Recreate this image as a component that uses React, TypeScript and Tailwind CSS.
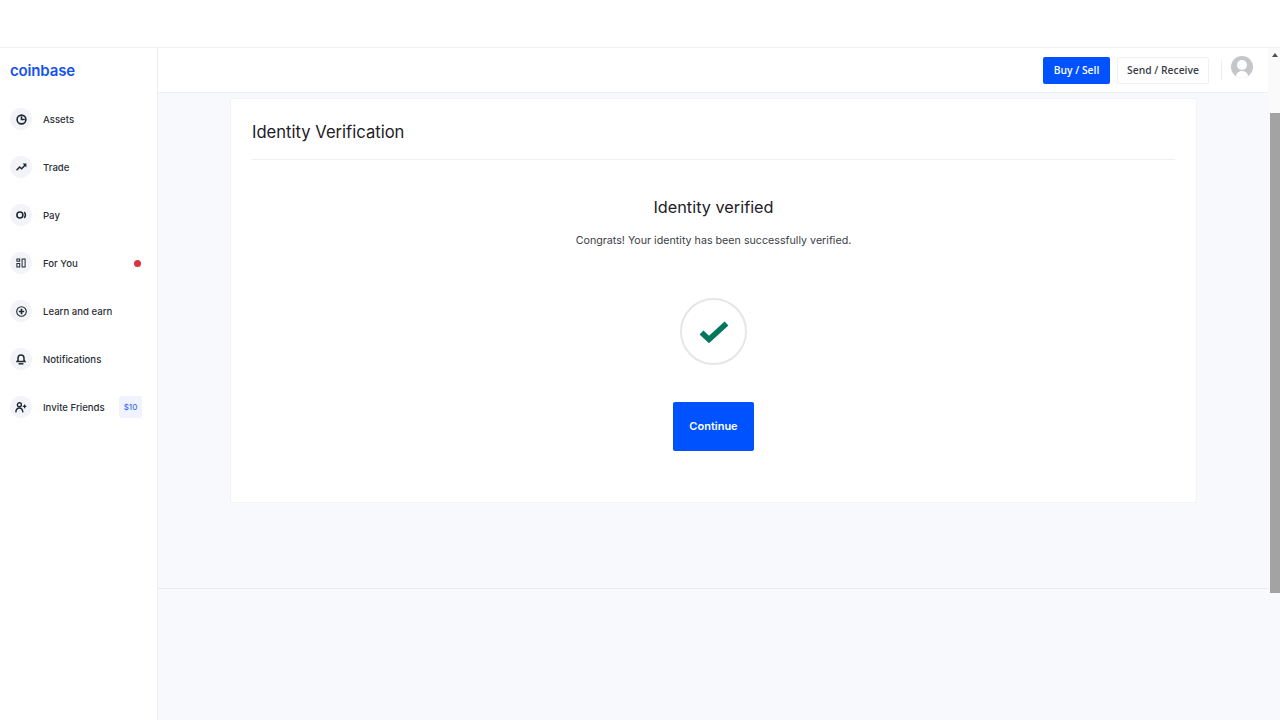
import React from 'react';

const font = { inter: 'font-["Inter",sans-serif]' };

function AssetsIcon() {
  return (
    <svg width="11" height="11" viewBox="0 0 11 11" fill="none" stroke="#1f2937" strokeWidth="1.6">
      <circle cx="5.5" cy="5.5" r="4.4" />
      <path d="M5.5 2.2V5.5H8.8" />
    </svg>
  );
}

function TradeIcon() {
  return (
    <svg width="11" height="10" viewBox="0 0 11 10" fill="none" stroke="#1f2937" strokeWidth="1.5">
      <path d="M0.6 8.2L3.6 5L5.6 6.8L9 3.2" />
      <path d="M6.6 1.6H10.4V5.4Z" fill="#1f2937" stroke="none" />
    </svg>
  );
}

function PayIcon() {
  return (
    <svg width="11" height="10" viewBox="0 0 11 10" fill="none" stroke="#1f2937" strokeWidth="1.6">
      <circle cx="3.9" cy="5" r="3" />
      <path d="M8.2 2.2C9.8 3.4 9.8 6.6 8.2 7.8" />
    </svg>
  );
}

function ForYouIcon() {
  return (
    <svg width="10" height="10" viewBox="0 0 10 10" fill="#1f2937" fillRule="evenodd">
      <path d="M0.4 0.4H4.2V3.8H0.4ZM1.4 1.4V2.8H3.2V1.4Z" />
      <path d="M0.4 5H4.2V9.6H0.4ZM1.4 6V8.6H3.2V6Z" />
      <path d="M5.6 0.4H9.6V9.6H5.6ZM6.6 1.4V8.6H8.6V1.4Z" />
    </svg>
  );
}

function LearnIcon() {
  return (
    <svg width="11" height="11" viewBox="0 0 11 11" fill="none" stroke="#1f2937" strokeWidth="1.1">
      <circle cx="5.5" cy="5.5" r="4.8" />
      <path d="M5.5 2.8V8.2M2.8 5.5H8.2" strokeWidth="1.7" />
    </svg>
  );
}

function BellIcon() {
  return (
    <svg width="10" height="11" viewBox="0 0 10 11" fill="none" stroke="#1f2937" strokeWidth="1.5">
      <path d="M1.2 7.4H8.8L8 6.2V4.2C8 2.4 6.7 1 5 1C3.3 1 2 2.4 2 4.2V6.2Z" />
      <path d="M2.6 9.8H7.4" />
    </svg>
  );
}

function InviteIcon() {
  return (
    <svg width="12" height="11" viewBox="0 0 12 11" fill="none" stroke="#1f2937" strokeWidth="1.4">
      <circle cx="4.4" cy="2.8" r="2" />
      <path d="M0.8 10.4C1 7.6 2.4 6 4.4 6C6.4 6 7.6 7.6 7.9 10.4" />
      <path d="M9.6 2.6V6.2M7.8 4.4H11.4" strokeWidth="1.2" />
    </svg>
  );
}

const navItems = [
  { label: 'Assets', icon: <AssetsIcon /> },
  { label: 'Trade', icon: <TradeIcon /> },
  { label: 'Pay', icon: <PayIcon /> },
  { label: 'For You', icon: <ForYouIcon />, dot: true },
  { label: 'Learn and earn', icon: <LearnIcon /> },
  { label: 'Notifications', icon: <BellIcon /> },
  { label: 'Invite Friends', icon: <InviteIcon />, badge: '$10' },
];

function Sidebar() {
  return (
    <aside className="w-[158px] shrink-0 bg-white border-r border-[#eeeff2] flex flex-col">
      <div className={`h-[46px] pl-[10px] flex items-center text-[#1652f0] text-[15px] font-semibold tracking-[-0.15px] ${font.inter}`}>
        coinbase
      </div>
      <nav className="flex flex-col gap-[26px] pl-[10px] pr-[15px] pt-[14px]">
        {navItems.map((item) => (
          <div key={item.label} className="h-[22px] flex items-center">
            <div className="w-[22px] h-[22px] rounded-full bg-[#f3f4f7] flex items-center justify-center shrink-0">
              {item.icon}
            </div>
            <span className={`ml-[11px] pt-[2px] flex-1 text-[9.6px] font-medium text-[#2b2f36] whitespace-nowrap ${font.inter}`}>
              {item.label}
            </span>
            {item.dot && <span className="w-[7px] h-[7px] rounded-full bg-[#d9343f] mr-[1px]" />}
            {item.badge && (
              <span className={`w-[23px] h-[22px] rounded-[3px] bg-[#f0f3fd] flex items-center justify-center text-[8px] font-medium text-[#3f6fe8] ${font.inter}`}>
                {item.badge}
              </span>
            )}
          </div>
        ))}
      </nav>
    </aside>
  );
}

function Header() {
  return (
    <header className="h-[45px] shrink-0 bg-white border-b border-[#eeeff2] flex items-center justify-end">
      <button className='w-[67px] h-[27px] pt-px rounded-[2px] bg-[#0052ff] text-white text-[10.3px] font-semibold font-["Open_Sans",sans-serif]'>
        Buy / Sell
      </button>
      <button className='ml-[7px] w-[92px] h-[27px] pt-px rounded-[2px] bg-white border border-[#f0f1f3] text-[#3a3f47] text-[10.3px] font-semibold font-["Open_Sans",sans-serif]'>
        Send / Receive
      </button>
      <div className="ml-[12px] w-px h-[20px] bg-[#eeeff1]" />
      <div className="ml-[9px] mr-[15px] mb-[6px] w-[22px] h-[22px] rounded-full bg-[#c4c6c9] overflow-hidden flex justify-center">
        <svg width="22" height="22" viewBox="0 0 22 22" fill="#fff">
          <circle cx="11" cy="9" r="5" />
          <path d="M4.5 22C5 17 7.5 15 11 15C14.5 15 17 17 17.5 22Z" />
        </svg>
      </div>
    </header>
  );
}

function VerificationCard() {
  return (
    <section className={`w-[967px] h-[405px] bg-white border border-[#f2f3f5] rounded-[2px] px-[21px] ${font.inter}`}>
      <div className="h-[61px] border-b border-[#eeeff1] flex items-center">
        <h1 className="text-[16.6px] font-normal text-[#1d2127] pt-[7px]">Identity Verification</h1>
      </div>
      <div className="flex flex-col items-center">
        <h2 className="mt-[37px] text-[16.3px] leading-[20px] font-normal text-[#1d2127]">Identity verified</h2>
        <p className="mt-[16px] text-[10.7px] leading-[16px] text-[#3c4047]">
          Congrats! Your identity has been successfully verified.
        </p>
        <div className="mt-[49px] w-[67px] h-[67px] rounded-full border-2 border-[#e6e6e7] flex items-center justify-center">
          <svg width="30" height="24" viewBox="0 0 30 24" fill="none" stroke="#03765c" strokeWidth="5.6">
            <path d="M2.5 12.5L10 19.5L27.5 3.5" />
          </svg>
        </div>
        <button className="mt-[37px] w-[81px] h-[49px] rounded-[2px] bg-[#0052ff] text-white text-[11px] font-semibold">
          Continue
        </button>
      </div>
    </section>
  );
}

function Scrollbar() {
  return (
    <div className="w-[12px] h-[545px] shrink-0 flex flex-col items-end">
      <div className="h-[65px] w-[11px] bg-[#fafafa] flex justify-center pt-[5px]">
        <div className="w-0 h-0 border-x-[3px] border-x-transparent border-b-[4px] border-b-[#505050]" />
      </div>
      <div className="w-[10px] h-[480px] bg-[#a3a3a3]" />
    </div>
  );
}

export default function App() {
  return (
    <div className="w-[1280px] h-[720px] overflow-hidden bg-white flex flex-col">
      <div className="h-[48px] shrink-0 bg-white border-b border-[#f0f1f3]" />
      <div className="flex-1 flex min-h-0">
        <Sidebar />
        <div className="flex-1 flex bg-[#f8f9fc] min-w-0">
          <main className="flex-1 min-w-0 flex flex-col">
            <Header />
            <div className="h-[496px] shrink-0 border-b border-[#e9ebef] pt-[5px] pl-[72px]">
              <VerificationCard />
            </div>
          </main>
          <Scrollbar />
        </div>
      </div>
    </div>
  );
}
